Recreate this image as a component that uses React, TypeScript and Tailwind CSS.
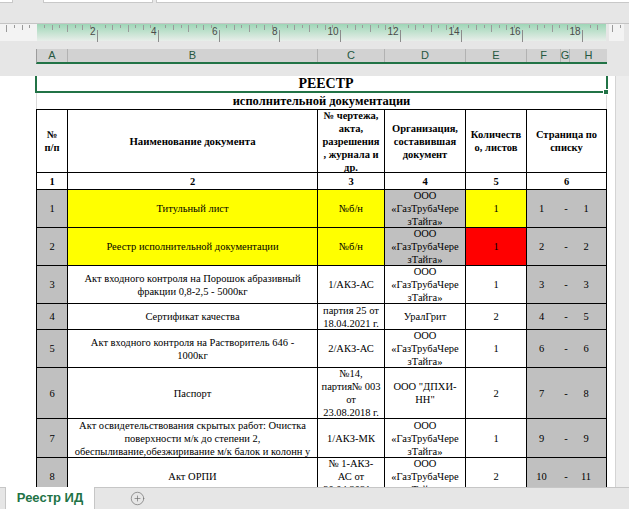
import { CirclePlus } from 'lucide-react';

type Row = {
  n: string;
  name: string[];
  doc: string[];
  org: string[];
  qty: string;
  from: string;
  to: string;
  h: number;
  hl?: boolean;
  red?: boolean;
};

const ORG = ['ООО', '«ГазТрубаЧере', 'зТайга»'];

const rows: Row[] = [
  { n: '1', name: ['Титульный лист'], doc: ['№б/н'], org: ORG, qty: '1', from: '1', to: '1', h: 38, hl: true },
  { n: '2', name: ['Реестр исполнительной документации'], doc: ['№б/н'], org: ORG, qty: '1', from: '2', to: '2', h: 38, hl: true, red: true },
  {
    n: '3',
    name: ['Акт входного контроля на Порошок абразивный', 'фракции 0,8-2,5 - 5000кг'],
    doc: ['1/АКЗ-АС'],
    org: ORG,
    qty: '1',
    from: '3',
    to: '3',
    h: 38,
  },
  { n: '4', name: ['Сертификат качества'], doc: ['партия 25 от', '18.04.2021 г.'], org: ['УралГрит'], qty: '2', from: '4', to: '5', h: 26 },
  {
    n: '5',
    name: ['Акт входного контроля на Растворитель 646 -', '1000кг'],
    doc: ['2/АКЗ-АС'],
    org: ORG,
    qty: '1',
    from: '6',
    to: '6',
    h: 38,
  },
  {
    n: '6',
    name: ['Паспорт'],
    doc: ['№14,', 'партия№ 003', 'от', '23.08.2018 г.'],
    org: ['ООО "ДПХИ-', 'НН"'],
    qty: '2',
    from: '7',
    to: '8',
    h: 51,
  },
  {
    n: '7',
    name: [
      'Акт освидетельствования скрытых работ: Очистка',
      'поверхности м/к до степени 2,',
      'обеспыливание,обезжиривание м/к балок и колонн у',
    ],
    doc: ['1/АКЗ-МК'],
    org: ORG,
    qty: '1',
    from: '9',
    to: '9',
    h: 39,
  },
  { n: '8', name: ['Акт ОРПИ'], doc: ['№ 1-АКЗ-', 'АС от', '30.04.2021 г.'], org: ORG, qty: '2', from: '10', to: '11', h: 38 },
];

const cell =
  'border-r border-b border-black flex flex-col items-center justify-center text-center overflow-hidden leading-[13px]';

function Lines({ lines }: { lines: string[] }) {
  return (
    <>
      {lines.map((l, i) => (
        <div key={i} className="whitespace-nowrap">
          {l}
        </div>
      ))}
    </>
  );
}

function Ruler() {
  const origin = 36.7;
  const cm = 30.3;
  const marks = [];
  for (let q = -5; q <= 80; q++) {
    const x = Math.round(origin + (q * cm) / 4) + 0.5;
    if (x < 1 || x > 624) continue;
    if (x > 605 && x < 610) continue;
    if (q === 0) continue;
    const cmIdx = q / 4;
    if (q % 4 === 0 && cmIdx % 2 === 0 && cmIdx > 0) {
      marks.push(<line key={'l' + q} x1={x} x2={x} y1={6} y2={18} stroke="#8c8c8c" />);
      marks.push(
        <text key={'t' + q} x={x - 2} y={10.5} textAnchor="end" fontSize="10" fill="#4a4a4a" fontFamily="Liberation Sans, sans-serif">
          {cmIdx}
        </text>
      );
    } else {
      const len = q % 4 === 0 ? 7 : q % 2 === 0 ? 5 : 3;
      marks.push(<line key={'k' + q} x1={x} x2={x} y1={1} y2={1 + len} stroke="#9a9a9a" />);
    }
  }
  return (
    <div className="relative h-[18px] flex border-t border-[#c4c4c4]">
      <div className="w-[37px] bg-[#f3f3f3]" />
      <div className="w-[569px] bg-linear-to-b from-[#9ed6b7] to-[#e8eeea]" />
      <div className="w-[3px]" />
      <div className="w-[15px] bg-[#f3f3f3]" />
      <svg className="absolute inset-0" width="629" height="18">
        {marks}
      </svg>
    </div>
  );
}

const letters: [string, number][] = [
  ['A', 31],
  ['B', 250],
  ['C', 67],
  ['D', 81],
  ['E', 61],
  ['F', 34],
  ['G', 9],
  ['H', 37],
];

export default function App() {
  return (
    <div className="w-[629px] h-[509px] bg-[#e6e6e6] overflow-hidden flex flex-col font-['Liberation_Sans',sans-serif]">
      {/* top strip */}
      <div className="h-[3px] flex">
        <div className="w-[13px] bg-white border-b border-r border-[#c8c8c8]" />
        <div className="w-[30px]" />
        <div className="w-[110px] bg-white border-b border-x border-[#c8c8c8]" />
        <div className="w-[3px]" />
        <div className="flex-1 bg-white border-b border-l border-[#c8c8c8]" />
      </div>

      <div className="h-[20px]" />
      <Ruler />
      <div className="h-[8px]" />

      {/* column headers */}
      <div className="h-[15px] flex">
        <div className="w-[36px]" />
        <div className="flex border-l border-[#9c9c9c] border-b-2 border-b-[#217346] bg-[#d2d2d2]">
          {letters.map(([l, w]) => (
            <div
              key={l}
              style={{ width: w }}
              className="border-r border-[#b2b2b2] last:border-r-0 flex items-center justify-center text-[11px] leading-none text-[#26573f]"
            >
              {l}
            </div>
          ))}
        </div>
      </div>

      <div className="h-[12px]" />

      {/* page */}
      <div className="flex-1 flex min-h-0">
        <div className="w-[615px] bg-white overflow-hidden font-['Liberation_Serif',serif] text-black">
          <div className="relative ml-[35px] w-[573px] h-[17px] border-l-2 border-r-2 border-b-2 border-[#217346] flex items-center justify-center pl-[9px] text-[14px] font-bold leading-none">
            РЕЕСТР
            <div className="absolute -right-[3px] -bottom-[4px] w-[6px] h-[6px] bg-[#217346] border border-white" />
          </div>
          <div className="ml-[36px] w-[571px] h-[16px] border-x border-[#d9d9d9] flex items-center justify-center text-[12.5px] font-bold leading-none">
            исполнительной документации
          </div>

          <div className="ml-[36px] w-[571px] grid grid-cols-[31px_250px_67px_81px_61px_80px] border-l border-t border-black text-[10.5px]">
            {/* header */}
            <div className={`${cell} h-[63px] font-bold`}>
              <Lines lines={['№', 'п/п']} />
            </div>
            <div className={`${cell} h-[63px] font-bold text-[10.8px]`}>Наименование документа</div>
            <div className={`${cell} h-[63px] font-bold`}>
              <Lines lines={['№ чертежа,', 'акта,', 'разрешения', ', журнала и', 'др.']} />
            </div>
            <div className={`${cell} h-[63px] font-bold`}>
              <Lines lines={['Организация,', 'составившая', 'документ']} />
            </div>
            <div className={`${cell} h-[63px] font-bold`}>
              <Lines lines={['Количеств', 'о, листов']} />
            </div>
            <div className={`${cell} h-[63px] font-bold`}>
              <Lines lines={['Страница по', 'списку']} />
            </div>

            {['1', '2', '3', '4', '5', '6'].map((d) => (
              <div key={d} className={`${cell} h-[17px] font-bold`}>
                {d}
              </div>
            ))}

            {rows.map((r) => (
              <Line key={r.n} r={r} />
            ))}
          </div>
        </div>
        <div className="flex-1 bg-[#ededed] border-l border-[#d4d4d4]" />
      </div>

      {/* sheet tabs */}
      <div className="h-[22px] flex items-stretch border-t border-[#c6c6c6] bg-[#e6e6e6]">
        <div className="w-[5px]" />
        <div className="w-[90px] -mt-px bg-white border-x border-[#c6c6c6] flex items-center justify-center text-[13px] font-bold text-[#217346]">
          Реестр ИД
        </div>
        <div className="w-[35px]" />
        <div className="flex items-center">
          <CirclePlus size={15} strokeWidth={1.1} color="#6f6f6f" />
        </div>
      </div>
    </div>
  );
}

function Line({ r }: { r: Row }) {
  const h = { height: r.h };
  const grey = 'bg-[#c0c0c0]';
  const yellow = 'bg-[#ffff00]';
  return (
    <>
      <div style={h} className={`${cell} ${grey}`}>
        {r.n}
      </div>
      <div style={h} className={`${cell} ${r.hl ? yellow : 'bg-white'}`}>
        <Lines lines={r.name} />
      </div>
      <div style={h} className={`${cell} ${r.hl ? yellow : 'bg-white'}`}>
        <Lines lines={r.doc} />
      </div>
      <div style={h} className={`${cell} ${r.hl ? grey : 'bg-white'}`}>
        <Lines lines={r.org} />
      </div>
      <div style={h} className={`${cell} ${r.red ? 'bg-[#ff0000]' : r.hl ? yellow : 'bg-white'}`}>
        {r.qty}
      </div>
      <div style={h} className={`${cell} ${grey} !items-stretch`}>
        <div className="grid grid-cols-[29px_20px_20px_1fr] text-center">
          <span>{r.from}</span>
          <span>-</span>
          <span>{r.to}</span>
          <span />
        </div>
      </div>
    </>
  );
}
